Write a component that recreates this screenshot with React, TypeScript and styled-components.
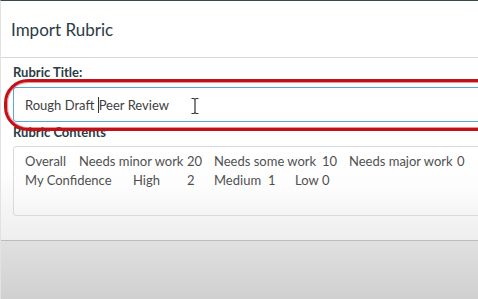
import React from "react";
import styled, { createGlobalStyle } from "styled-components";

const Global = createGlobalStyle`
  html, body { margin: 0; padding: 0; background: #fff; }
  body { font-family: Lato, "Open Sans", sans-serif; }
`;

const Frame = styled.div`
  position: relative;
  width: 478px;
  height: 299px;
  overflow: hidden;
  box-sizing: border-box;
  border-top: 1px solid #3b484e;
  border-left: 1px solid #e2e2e2;
  display: flex;
  flex-direction: column;
`;

const Header = styled.div`
  height: 56px;
  flex: none;
  display: flex;
  align-items: center;
  padding-left: 10px;
  border-bottom: 1px solid #d6d6d6;
  font-size: 17px;
  color: #2d3b45;
`;

const Body = styled.div`
  flex: none;
  height: 182px;
  box-sizing: border-box;
  padding: 6px 0 0 12px;
  background: linear-gradient(#ffffff 0%, #ffffff 62%, #f6f6f6 80%, #eeeeee 100%);
  display: flex;
  flex-direction: column;
`;

const Label = styled.div<{ $gap?: number }>`
  font-size: 13px;
  font-weight: 700;
  color: #2d3b45;
  line-height: 16px;
  margin-top: ${(p) => p.$gap ?? 0}px;
  white-space: nowrap;
`;

const Input = styled.div`
  margin-top: 7px;
  width: 520px;
  height: 35px;
  box-sizing: border-box;
  border: 1px solid #58a9d8;
  border-radius: 3px;
  display: flex;
  align-items: center;
  padding-left: 11px;
  font-size: 13px;
  color: #404040;
  white-space: pre;
`;

const Caret = styled.span`
  display: inline-block;
  width: 1px;
  height: 16px;
  background: #333;
  vertical-align: middle;
`;

const Contents = styled.div`
  margin-top: 6px;
  width: 520px;
  height: 70px;
  box-sizing: border-box;
  border: 1px solid #dadada;
  border-radius: 3px;
  padding: 5px 0 0 11px;
  background: linear-gradient(#ffffff 0%, #fdfdfd 60%, #f4f4f4 100%);
  font-size: 13px;
  line-height: 19px;
  color: #505050;
  white-space: pre;
  tab-size: 27px;
`;

const Footer = styled.div`
  flex: 1;
  border-top: 1px solid #bdbdbd;
  background: linear-gradient(#e0e0e0, #d0d0d0);
`;

const Annotation = styled.div`
  position: absolute;
  left: 3px;
  top: 78px;
  width: 540px;
  height: 52px;
  box-sizing: border-box;
  border: 3px solid #c1121a;
  border-radius: 24px;
  box-shadow: inset 0 0 0 1px rgba(230, 40, 40, 0.5);
  pointer-events: none;
`;

const Cursor = styled.svg`
  position: absolute;
  left: 189px;
  top: 96px;
`;

export default function App() {
  return (
    <>
      <Global />
      <Frame>
        <Header>Import Rubric</Header>
        <Body>
          <Label>Rubric Title:</Label>
          <Input>
            Rough Draft <Caret />Peer Review
          </Input>
          <Label $gap={2}>Rubric Contents</Label>
          <Contents>
            {"Overall\tNeeds minor work\t20\tNeeds some work\t10\tNeeds major work\t0\nMy Confidence\tHigh\t2\tMedium\t1\tLow\t0"}
          </Contents>
        </Body>
        <Footer />
        <Annotation />
        <Cursor width="10" height="18" viewBox="0 0 10 18">
          <path d="M1.5 1.5 H3.5 Q5 1.5 5 3 V15 Q5 16.5 3.5 16.5 H1.5 M8.5 1.5 H6.5 Q5 1.5 5 3 M5 15 Q5 16.5 6.5 16.5 H8.5" fill="none" stroke="#333" strokeWidth="1.2" />
        </Cursor>
      </Frame>
    </>
  );
}
